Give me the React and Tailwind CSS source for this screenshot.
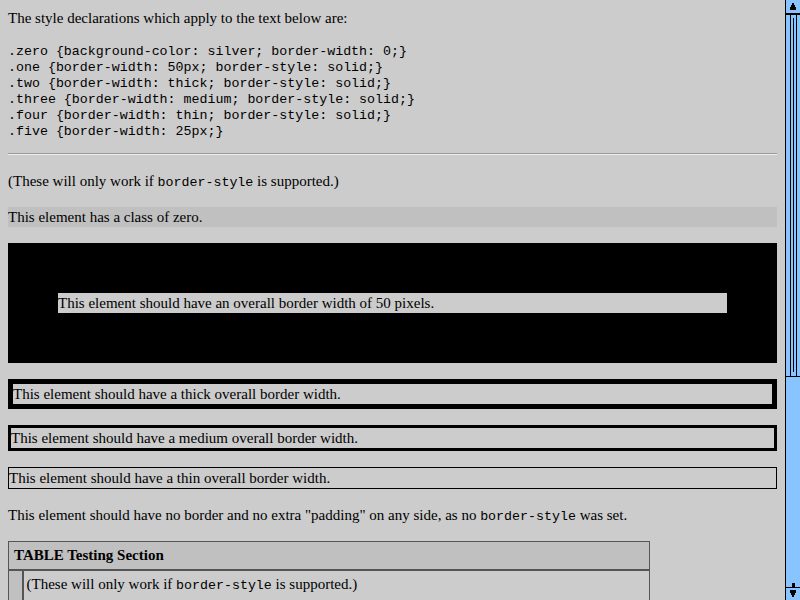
import React from 'react'

const serif = { fontFamily: '"Liberation Serif", "Times New Roman", serif' }

function Code({ children }) {
  return <code className="font-['Liberation_Mono',monospace] text-[13.3px] leading-none">{children}</code>
}

function Scrollbar() {
  return (
    <div className="w-[15px] h-[600px] shrink-0 bg-[#88c4ff] border-l border-black flex flex-col">
      {/* up button */}
      <div className="h-[15px] border-b-2 border-black flex items-center justify-center">
        <svg width="10" height="10" viewBox="0 0 10 10">
          <path d="M4 1h2v2h1v2h1v3H2V5h1V3h1z" fill="#000" />
        </svg>
      </div>
      {/* thumb */}
      <div className="h-[362px] border-b border-black flex justify-center">
        <div className="w-[7px] h-full border-x border-black flex justify-center">
          <div className="w-px h-[354px] mt-[3px] bg-black" />
        </div>
      </div>
      <div className="flex-1" />
      {/* down button */}
      <div className="h-[17px] flex flex-col items-center">
        <div className="w-[3px] h-[4px] bg-black" />
        <div className="w-full border-t border-black flex-1 flex items-center justify-center">
          <svg width="10" height="10" viewBox="0 0 10 10">
            <path d="M2 1h6v3H7v2H6v2H4V6H3V4H2z" fill="#000" />
          </svg>
        </div>
      </div>
    </div>
  )
}

export default function App() {
  return (
    <div className="flex w-[800px] h-[600px] overflow-hidden bg-[#cccccc] text-black">
      <div className="w-[785px] h-[600px] overflow-hidden px-2 pt-2 text-[15px] leading-[20px]" style={serif}>
        <p>The style declarations which apply to the text below are:</p>
        <pre className="mt-4 font-['Liberation_Mono',monospace] text-[13.3px] leading-[16px]">
{`.zero {background-color: silver; border-width: 0;}
.one {border-width: 50px; border-style: solid;}
.two {border-width: thick; border-style: solid;}
.three {border-width: medium; border-style: solid;}
.four {border-width: thin; border-style: solid;}
.five {border-width: 25px;}`}
        </pre>
        <hr className="mt-[13px] border-t border-t-[#999999] border-b border-b-[#eeeeee]" />
        <p className="mt-4">(These will only work if <Code>border-style</Code> is supported.)</p>

        <p className="mt-4 bg-[#c0c0c0]">This element has a class of zero.</p>
        <p className="mt-4 border-[50px] border-black">This element should have an overall border width of 50 pixels.</p>
        <p className="mt-4 border-[5px] border-black">This element should have a thick overall border width.</p>
        <p className="mt-4 border-[3px] border-black">This element should have a medium overall border width.</p>
        <p className="mt-4 border border-black">This element should have a thin overall border width.</p>
        <p className="mt-4">
          This element should have no border and no extra "padding" on any side, as no <Code>border-style</Code> was set.
        </p>

        <table className="mt-4 w-[642px] border border-[#555555] border-collapse">
          <tbody>
            <tr>
              <td colSpan={2} className="bg-[#c0c0c0] border-b-2 border-[#555555] px-[5px] h-[28px] font-bold">
                TABLE Testing Section
              </td>
            </tr>
            <tr>
              <td className="w-[14px] bg-[#c0c0c0] border-l border-r-2 border-[#555555]" />
              <td className="px-[3px] pt-[3px] pb-[40px] align-top">
                (These will only work if <Code>border-style</Code> is supported.)
              </td>
            </tr>
          </tbody>
        </table>
      </div>
      <Scrollbar />
    </div>
  )
}
